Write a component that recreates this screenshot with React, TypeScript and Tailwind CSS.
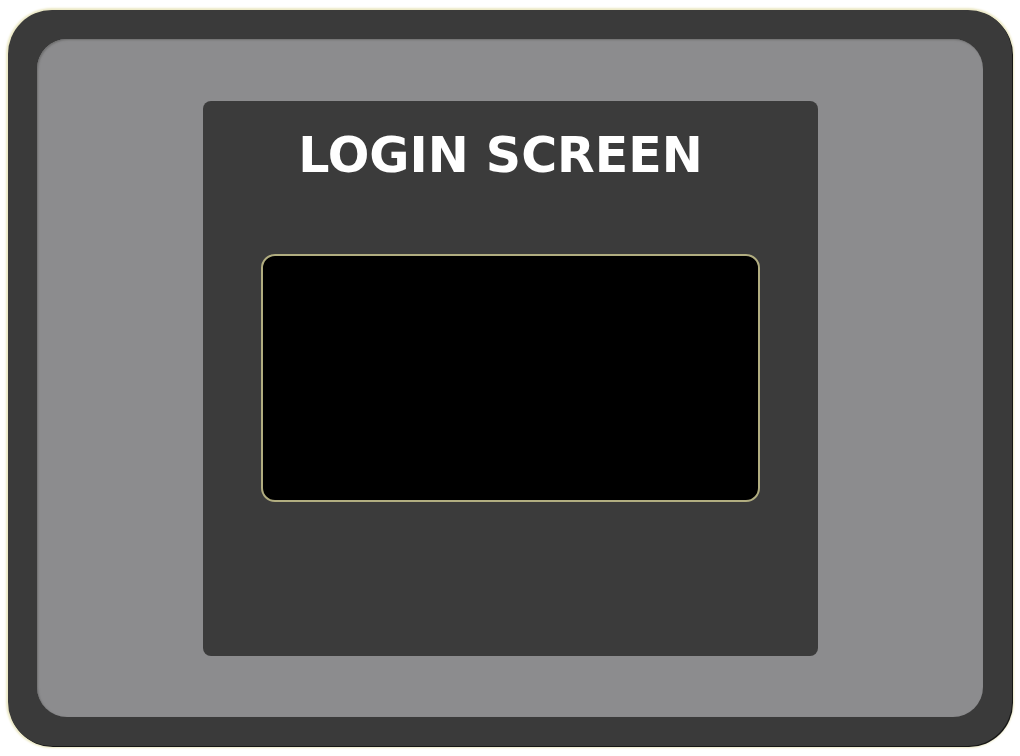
import React from "react";

const App = () => {
  return (
    <div className="w-[1020px] h-[756px] bg-white pt-[10px] pl-[8px]">
      <div className="w-[1004px] h-[736px] rounded-[44px] bg-[#3a3a3a] p-[29px] shadow-[1px_1px_0_#161616,0_0_2px_2px_#ece9c6]">
        <div className="h-full rounded-[30px] bg-[#8c8c8e] flex items-center justify-center shadow-[inset_1px_1px_2px_#6e6e6e]">
          <div className="w-[615px] h-[555px] rounded-[8px] bg-[#3b3b3b] flex flex-col items-center pt-[30px]">
            <h1 className="text-[49px] leading-none font-bold text-white pr-[19px] font-['DejaVu_Sans',Verdana,sans-serif]">
              LOGIN SCREEN
            </h1>
            <div className="mt-[74px] w-[499px] h-[248px] rounded-[14px] border-2 border-[#b1ad80] bg-black" />
          </div>
        </div>
      </div>
    </div>
  );
};

export default App;
